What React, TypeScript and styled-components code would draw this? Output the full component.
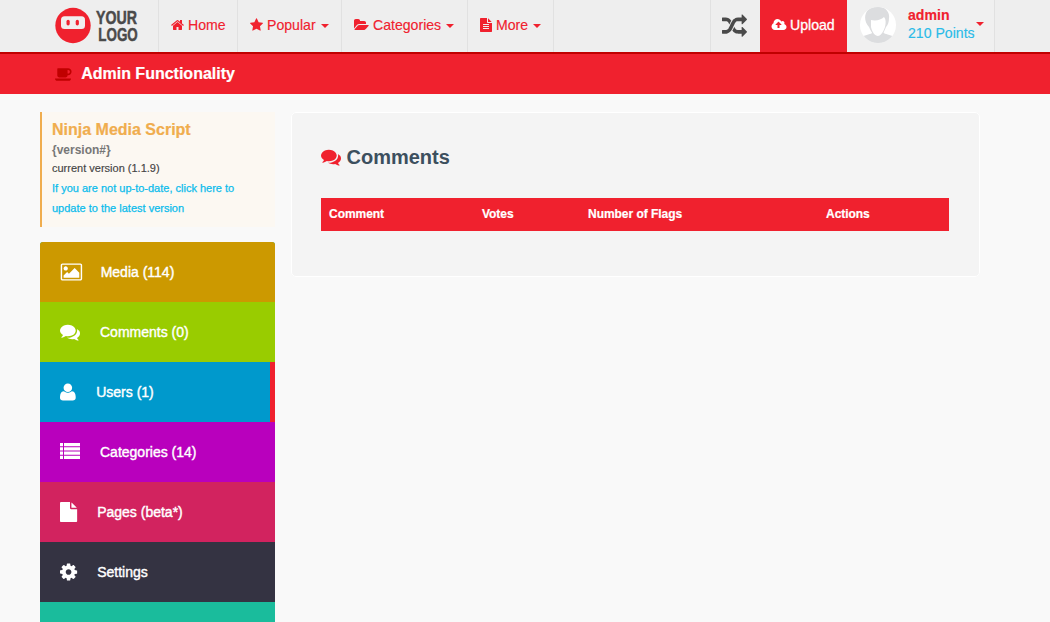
import React from "react";
import styled, { createGlobalStyle } from "styled-components";

const RED = "#f0212e";

const GlobalStyle = createGlobalStyle`
  * { box-sizing: border-box; }
  body {
    margin: 0;
    height: 100vh;
    background: #f9f9f9;
    font-family: "Liberation Sans", Arial, sans-serif;
    font-size: 14px;
    overflow: hidden;
    -webkit-font-smoothing: antialiased;
  }
`;

type Glyph = { x: number; w: number; d: string };

const line = "q0 14 9 23t23 9h704q14 0 23-9t9-23v-64q0-14-9-23t-23-9h-704q-14 0-23 9t-9 23z";

const glyphs: Record<string, Glyph> = {
  home: { x: 64, w: 1664, d: "M1472 992v480q0 26-19 45t-45 19h-384v-384h-256v384h-384q-26 0-45-19t-19-45v-480q0-1 .5-3t.5-3l575-474 575 474q1 2 1 6zm223-69l-62 74q-8 9-21 11h-3q-13 0-21-7l-692-577-692 577q-12 8-24 7-13-2-21-11l-62-74q-8-10-7-23.5t11-21.5l719-599q32-26 76-26t76 26l244 204v-195q0-14 9-23t23-9h192q14 0 23 9t9 23v408l219 182q10 8 11 21.5t-7 23.5z" },
  star: { x: 64, w: 1664, d: "M1728 647q0 22-26 48l-363 354 86 500q1 7 1 20 0 21-10.5 35.5t-30.5 14.5q-19 0-40-12l-449-236-449 236q-22 12-40 12-21 0-31.5-14.5t-10.5-35.5q0-6 2-20l86-500-364-354q-25-27-25-48 0-37 56-46l502-73 225-455q19-41 49-41t49 41l225 455 502 73q56 9 56 46z" },
  folder: { x: 0, w: 1920, d: "M1879 952q0 31-31 66l-336 396q-43 51-120.5 86.5t-143.5 35.5h-1088q-34 0-60.5-13t-26.5-43q0-31 31-66l336-396q43-51 120.5-86.5t143.5-35.5h1088q34 0 60.5 13t26.5 43zm-343-344v160h-832q-94 0-197 47.5t-164 119.5l-337 396-5 6q0-4-.5-12.5t-.5-12.5v-960q0-92 66-158t158-66h320q92 0 158 66t66 158v32h544q92 0 158 66t66 158z" },
  fileText: { x: 128, w: 1536, d: `M1596 476q14 14 28 36h-472v-472q22 14 36 28zm-476 164h544v1056q0 40-28 68t-68 28h-1344q-40 0-68-28t-28-68v-1600q0-40 28-68t68-28h800v544q0 40 28 68t68 28zM512 1376${line}M512 1120${line}M512 864${line}` },
  file: { x: 128, w: 1536, d: "M1152 512v-472q22 14 36 28l408 408q14 14 28 36h-472zm-128 32q0 40 28 68t68 28h544v1056q0 40-28 68t-68 28h-1344q-40 0-68-28t-28-68v-1600q0-40 28-68t68-28h800v544z" },
  random: { x: 0, w: 1792, d: "M666 481q-60 92-137 273-22-45-37-72.5t-40.5-63.5-51-56.5-63-35-81.5-14.5h-224q-14 0-23-9t-9-23v-192q0-14 9-23t23-9h224q250 0 410 225zm1126 799q0 14-9 23l-320 320q-9 9-23 9-13 0-22.5-9.5t-9.5-22.5v-192q-32 0-85 .5t-81 1-73-1-71-5-64-10.5-63-18.5-58-28.5-59-40-55-53.5-56-69.5q59-93 136-273 22 45 37 72.5t40.5 63.5 51 56.5 63 35 81.5 14.5h256v-192q0-14 9-23t23-9q12 0 24 10l319 319q9 9 9 23zm0-896q0 14-9 23l-320 320q-9 9-23 9-13 0-22.5-9.5t-9.5-22.5v-192h-256q-48 0-87 15t-69 45-51 61.5-45 77.5q-32 62-78 171-29 66-49.5 111t-54 105-64 100-74 83-90 68.5-106.5 42-128 16.5h-224q-14 0-23-9t-9-23v-192q0-14 9-23t23-9h224q48 0 87-15t69-45 51-61.5 45-77.5q32-62 78-171 29-66 49.5-111t54-105 64-100 74-83 90-68.5 106.5-42 128-16.5h256v-192q0-14 9-23t23-9q12 0 24 10l319 319q9 9 9 23z" },
  upload: { x: 0, w: 1920, d: "M1216 864q0-14-9-23l-352-352q-9-9-23-9t-23 9l-351 351q-10 12-10 24 0 14 9 23t23 9h224v352q0 13 9.5 22.5t22.5 9.5h192q13 0 22.5-9.5t9.5-22.5v-352h224q13 0 22.5-9.5t9.5-22.5zm640 288q0 159-112.5 271.5t-271.5 112.5h-1088q-185 0-316.5-131.5t-131.5-316.5q0-130 70-240t188-165q-2-30-2-43 0-212 150-362t362-150q156 0 285.5 87t188.5 231q71-62 166-62 106 0 181 75t75 181q0 76-41 138 130 31 213.5 135.5t83.5 238.5z" },
  coffee: { x: 0, w: 1920, d: "M1664 640q0-80-56-136t-136-56h-64v384h64q80 0 136-56t56-136zm-1664 768h1792q0 106-75 181t-181 75h-1280q-106 0-181-75t-75-181zm1856-768q0 159-112.5 271.5t-271.5 112.5h-64v32q0 92-66 158t-158 66h-704q-92 0-158-66t-66-158v-736q0-26 19-45t45-19h1152q159 0 271.5 112.5t112.5 271.5z" },
  comments: { x: 0, w: 1792, d: "M1408 768q0 139-94 257t-256.5 186.5-353.5 68.5q-86 0-176-16-124 88-278 128-36 9-86 16h-3q-11 0-20.5-8t-11.5-21q-1-3-1-6.5t.5-6.5 2-6l2.5-5 3.5-5.5 4-5 4.5-5 4-4.5q5-6 23-25t26-29.5 22.5-29 25-38.5 20.5-44q-124-72-195-177t-71-224q0-139 94-257t256.5-186.5 353.5-68.5 353.5 68.5 256.5 186.5 94 257zm384 256q0 120-71 224.5t-195 176.5q10 24 20.5 44t25 38.5 22.5 29 26 29.5 23 25q1 1 4 4.5t4.5 5 4 5 3.5 5.5l2.5 5 2 6 .5 6.5-1 6.5q-3 14-13 22t-22 7q-50-7-86-16-154-40-278-128-90 16-176 16-271 0-472-132 58 4 88 4 161 0 309-45t264-129q125-92 192-212t67-254q0-77-23-152 129 71 204 178t75 230z" },
  picture: { x: 0, w: 1984, d: "M704 576q0 80-56 136t-136 56-136-56-56-136 56-136 136-56 136 56 56 136zm1024 384v448h-1408v-192l320-320 160 160 512-512zm96-704h-1600q-13 0-22.5 9.5t-9.5 22.5v1216q0 13 9.5 22.5t22.5 9.5h1600q13 0 22.5-9.5t9.5-22.5v-1216q0-13-9.5-22.5t-22.5-9.5zm160 32v1216q0 66-47 113t-113 47h-1600q-66 0-113-47t-47-113v-1216q0-66 47-113t113-47h1600q66 0 113 47t47 113z" },
  user: { x: 192, w: 1408, d: "M1600 1405q0 120-73 189.5t-194 69.5h-874q-121 0-194-69.5t-73-189.5q0-53 3.5-103.5t14-109 26.5-108.5 43-97.5 62-81 85.5-53.5 111.5-20q9 0 42 21.5t74.5 48 108 48 133.5 21.5 133.5-21.5 108-48 74.5-48 42-21.5q61 0 111.5 20t85.5 53.5 62 81 43 97.5 26.5 108.5 14 109 3.5 103.5zm-320-893q0 159-112.5 271.5t-271.5 112.5-271.5-112.5-112.5-271.5 112.5-271.5 271.5-112.5 271.5 112.5 112.5 271.5z" },
  list: { x: 0, w: 1792, d: "M0 1240h269v280h-269zM0 860h269v280h-269zM0 475h269v280h-269zM0 90h269v280h-269zM358 1240h1434v280h-1434zM358 860h1434v280h-1434zM358 475h1434v280h-1434zM358 90h1434v280h-1434z" },
  cog: { x: 128, w: 1536, d: "M1152 896q0-106-75-181t-181-75-181 75-75 181 75 181 181 75 181-75 75-181zm512-109v222q0 12-8 23t-20 13l-185 28q-19 54-39 91 35 50 107 138 10 12 10 25t-9 23q-27 37-99 108t-94 71q-12 0-26-9l-138-108q-44 23-91 38-16 136-29 186-7 28-36 28h-222q-14 0-24.5-8.5t-11.5-21.5l-28-184q-49-16-90-37l-141 107q-10 9-25 9-14 0-25-11-126-114-165-168-7-10-7-23 0-12 8-23 15-21 51-66.5t54-70.5q-27-50-41-99l-183-27q-13-2-21-12.5t-8-23.5v-222q0-12 8-23t19-13l186-28q14-46 39-92-40-57-107-138-10-12-10-24 0-10 9-23 26-36 98.5-107.5t94.5-71.5q13 0 26 10l138 107q44-23 91-38 16-136 29-186 7-28 36-28h222q14 0 24.5 8.5t11.5 21.5l28 184q49 16 90 37l142-107q9-9 24-9 13 0 25 10 129 119 165 170 7 8 7 22 0 12-8 23-15 21-51 66.5t-54 70.5q26 50 41 98l183 28q13 2 21 12.5t8 23.5z" },
};

const GlyphSvg = styled.svg`
  display: block;
  flex: none;
  fill: currentColor;
  overflow: visible;
`;

function Icon({ name, size }: { name: string; size: number }) {
  const g = glyphs[name];
  return (
    <GlyphSvg width={(g.w * size) / 1792} height={size} viewBox={`${g.x} 0 ${g.w} 1792`}>
      <path d={g.d} fillRule="evenodd" />
    </GlyphSvg>
  );
}

const Page = styled.div`
  display: flex;
  flex-direction: column;
  height: 100vh;
  overflow: hidden;
`;

const NavBar = styled.header`
  display: flex;
  flex: none;
  height: 54px;
  padding: 0 55px 0 55px;
  background: #eee;
  border-bottom: 2px solid #c00000;
`;

const Logo = styled.a`
  width: 103px;
  padding-top: 7px;
  svg { display: block; overflow: visible; }
`;

const NavItem = styled.a<{ $w: number }>`
  display: flex;
  align-items: center;
  gap: 4px;
  width: ${(p) => p.$w}px;
  padding: 0 0 2px 12px;
  border-left: 1px solid #e1e1e1;
  color: ${RED};
  font-size: 14.1px;
  white-space: nowrap;
  -webkit-text-stroke: 0.15px ${RED};
  svg { stroke: none; }
`;

const Caret = styled.i`
  margin: 2px 0 0 1px;
  border: 4px solid transparent;
  border-top-color: ${RED};
  border-bottom: 0;
`;

const NavEnd = styled.div`
  flex: 1;
  border-left: 1px solid #e1e1e1;
`;

const Shuffle = styled.a`
  display: flex;
  align-items: center;
  width: 50px;
  padding: 0 0 0 11px;
  border-left: 1px solid #e1e1e1;
  color: #4a4a4a;
`;

const Upload = styled.a`
  display: flex;
  align-items: center;
  gap: 3px;
  width: 87px;
  padding: 0 0 2px 12px;
  background: ${RED};
  color: #fff;
  font-size: 14.1px;
  -webkit-text-stroke: 0.3px #fff;
  svg { stroke: none; }
`;

const Account = styled.a`
  display: flex;
  width: 148px;
  padding: 7px 0 0 13px;
  background: #f0f0f0;
  border-right: 1px solid #e1e1e1;
`;

const AccountText = styled.div`
  width: 67px;
  margin: -1px 0 0 12px;
  font-size: 14.1px;
  line-height: 18px;
  white-space: nowrap;
  color: #2abbe8;
  -webkit-text-stroke: 0.15px currentColor;
  strong { display: block; color: ${RED}; }
`;

const AccountCaret = styled(Caret)`
  margin: 15px 0 0 1px;
  height: 4px;
`;

const TitleBar = styled.div`
  display: flex;
  flex: none;
  align-items: center;
  gap: 9px;
  height: 40px;
  padding: 0 0 1px 55px;
  background: ${RED};
  color: #fff;
  font-size: 16px;
  font-weight: bold;
  -webkit-text-stroke: 0.2px #fff;
  svg { color: #c00000; stroke: none; }
`;

const Content = styled.main`
  display: flex;
  flex: 1;
  min-height: 0;
  align-items: flex-start;
  gap: 16px;
  padding: 18px 70px 0 40px;
`;

const Sidebar = styled.aside`
  display: flex;
  flex: none;
  flex-direction: column;
  width: 235px;
  height: 100%;
`;

const VersionBox = styled.section`
  flex: none;
  height: 115px;
  margin-bottom: 15px;
  padding: 7px 10px 0;
  border-left: 2px solid #f0ad4e;
  background: #fcf8f2;
  font-size: 11px;
`;

const ProductName = styled.h4`
  margin: 0;
  color: #f0ad4e;
  font-size: 16px;
  line-height: 22px;
  -webkit-text-stroke: 0.2px #f0ad4e;
`;

const VersionTag = styled.div`
  padding-top: 1px;
  color: #777;
  font-size: 12px;
  font-weight: bold;
  line-height: 16px;
`;

const Current = styled.div`
  color: #444;
  line-height: 20px;
  -webkit-text-stroke: 0.15px #444;
`;

const UpdateLink = styled.a`
  display: block;
  color: #0cbcec;
  line-height: 20px;
  white-space: nowrap;
  -webkit-text-stroke: 0.25px #0cbcec;
`;

const Menu = styled.nav`
  flex: 1;
  min-height: 0;
  border-radius: 3px 3px 0 0;
  overflow: hidden;
  background: #1abc9c;
`;

const MenuItem = styled.a<{ $bg: string; $active?: boolean; $gap?: number }>`
  display: flex;
  align-items: center;
  gap: ${(p) => p.$gap ?? 20}px;
  height: 60px;
  padding-left: 20px;
  background: ${(p) => p.$bg};
  border-right: ${(p) => (p.$active ? `5px solid ${RED}` : "0")};
  color: #fff;
  font-size: 14px;
  -webkit-text-stroke: 0.4px #fff;
  svg { stroke: none; }
`;

const Panel = styled.section`
  flex: 1;
  height: 165px;
  padding: 29px 30px 29px 29px;
  border: 1px solid #fff;
  border-radius: 5px;
  background: #f4f4f4;
`;

const PanelTitle = styled.h2`
  display: flex;
  align-items: center;
  gap: 5.5px;
  margin: 0 0 26px;
  height: 30px;
  color: #3c4f5e;
  font-size: 20px;
  svg { color: ${RED}; }
`;

const HeadRow = styled.div`
  display: grid;
  grid-template-columns: 153px 106px 238px 1fr;
  height: 33px;
  background: ${RED};
`;

const HeadCell = styled.div`
  padding-left: 8px;
  color: #fff;
  font-size: 12px;
  font-weight: bold;
  line-height: 32px;
  letter-spacing: -0.04px;
  -webkit-text-stroke: 0.2px #fff;
`;

const menu = [
  { icon: "picture", label: "Media (114)", bg: "#cc9900", gap: 18.5 },
  { icon: "comments", label: "Comments (0)", bg: "#99cc00" },
  { icon: "user", label: "Users (1)", bg: "#0099cc", active: true, gap: 20.5 },
  { icon: "list", label: "Categories (14)", bg: "#b900bd" },
  { icon: "file", label: "Pages (beta*)", bg: "#d2235f" },
  { icon: "cog", label: "Settings", bg: "#343342" },
];

const nav = [
  { icon: "home", label: "Home", w: 79 },
  { icon: "star", label: "Popular", w: 104, caret: true },
  { icon: "folder", label: "Categories", w: 126, caret: true },
  { icon: "fileText", label: "More", w: 86, caret: true },
];

export default function App() {
  return (
    <Page>
      <GlobalStyle />
      <NavBar>
        <Logo>
          <svg width="95" height="42" viewBox="0 0 95 42">
            <circle cx="18" cy="18.5" r="17.7" fill={RED} />
            <rect x="6" y="9.3" width="24" height="12.6" rx="3.5" fill="#f1eeee" />
            <rect x="11.5" y="12.8" width="3.2" height="5.6" rx="1.6" fill={RED} />
            <rect x="20.7" y="12.8" width="3.2" height="5.6" rx="1.6" fill={RED} />
            <g fill="#4a4a4a" stroke="#4a4a4a" strokeWidth="0.5" fontFamily="Liberation Sans, Arial, sans-serif" fontWeight="bold" fontSize="18.5">
              <text x="41" y="17" textLength="41" lengthAdjust="spacingAndGlyphs">YOUR</text>
              <text x="43.3" y="33.7" textLength="39.5" lengthAdjust="spacingAndGlyphs">LOGO</text>
            </g>
          </svg>
        </Logo>
        {nav.map((n) => (
          <NavItem key={n.label} $w={n.w}>
            <Icon name={n.icon} size={14} />
            {n.label}
            {n.caret && <Caret />}
          </NavItem>
        ))}
        <NavEnd />
        <Shuffle><Icon name="random" size={25} /></Shuffle>
        <Upload><Icon name="upload" size={14} />Upload</Upload>
        <Account>
          <svg width="36" height="36" viewBox="0 0 36 36">
            <defs><clipPath id="avatar"><circle cx="18" cy="18" r="18" /></clipPath></defs>
            <g clipPath="url(#avatar)">
              <rect width="36" height="36" fill="#fff" />
              <path d="M2 36V30C6 27 11 28 13 25L18 29L23 25C25 28 30 27 34 30V36Z" fill="#dcdddf" />
              <path d="M9 20C4 15 4 7 8 3C12-1 17 0 20 0C25 0 30 5 29 11C29 15 28 18 26 20C23 28 20 30 18 30C15 30 12 27 9 20Z" fill="#dcdddf" />
              <path d="M11 13C16 14 21 13 24 10C26 12 26 16 25 20C23 26 20 29 18 29C15 29 12 25 11 20Z" fill="#fff" />
            </g>
          </svg>
          <AccountText><strong>admin</strong>210 Points</AccountText>
          <AccountCaret />
        </Account>
      </NavBar>
      <TitleBar><Icon name="coffee" size={16} />Admin Functionality</TitleBar>
      <Content>
        <Sidebar>
          <VersionBox>
            <ProductName>Ninja Media Script</ProductName>
            <VersionTag>{"{version#}"}</VersionTag>
            <Current>current version (1.1.9)</Current>
            <UpdateLink>If you are not up-to-date, click here to<br />update to the latest version</UpdateLink>
          </VersionBox>
          <Menu>
            {menu.map((m) => (
              <MenuItem key={m.label} $bg={m.bg} $active={m.active} $gap={m.gap}>
                <Icon name={m.icon} size={20} />
                {m.label}
              </MenuItem>
            ))}
          </Menu>
        </Sidebar>
        <Panel>
          <PanelTitle><Icon name="comments" size={20} />Comments</PanelTitle>
          <HeadRow>
            <HeadCell>Comment</HeadCell>
            <HeadCell>Votes</HeadCell>
            <HeadCell>Number of Flags</HeadCell>
            <HeadCell>Actions</HeadCell>
          </HeadRow>
        </Panel>
      </Content>
    </Page>
  );
}
